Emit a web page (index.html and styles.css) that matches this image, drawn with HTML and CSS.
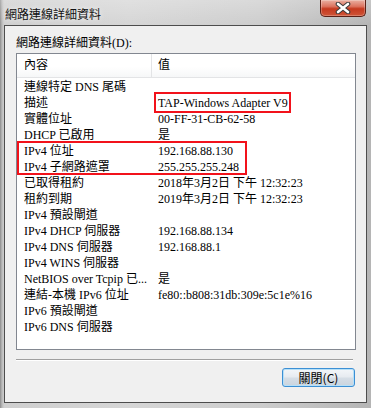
FILE: index.html
```html
<!DOCTYPE html>
<html lang="zh-Hant">
<head>
<meta charset="UTF-8" />
<meta name="viewport" content="width=device-width, initial-scale=1.0" />
<title>網路連線詳細資料</title>
<link rel="stylesheet" href="styles.css">
</head>
<body>
<div class="window">
  <div class="titlebar">
    <span class="title">網路連線詳細資料</span>
    <div class="close-btn">
      <svg width="18" height="12" viewBox="0 0 18 12">
        <path d="M4 2 L14 10 M14 2 L4 10" stroke="#3a3a3a" stroke-width="4.6" stroke-linecap="round"/>
        <path d="M4 2 L14 10 M14 2 L4 10" stroke="#ffffff" stroke-width="2.6" stroke-linecap="round"/>
      </svg>
    </div>
  </div>

  <div class="client">
    <div class="label">網路連線詳細資料(D):</div>

    <div class="listbox">
      <div class="list-head">
        <div class="col">內容</div>
        <div class="col">值</div>
      </div>
      <div class="list-body">
        <div class="row"><span>連線特定 DNS 尾碼</span><span></span></div>
        <div class="row"><span>描述</span><span>TAP-Windows Adapter V9</span></div>
        <div class="row"><span>實體位址</span><span>00-FF-31-CB-62-58</span></div>
        <div class="row"><span>DHCP 已啟用</span><span>是</span></div>
        <div class="row"><span>IPv4 位址</span><span>192.168.88.130</span></div>
        <div class="row"><span>IPv4 子網路遮罩</span><span>255.255.255.248</span></div>
        <div class="row"><span>已取得租約</span><span>2018年3月2日 下午 12:32:23</span></div>
        <div class="row"><span>租約到期</span><span>2019年3月2日 下午 12:32:23</span></div>
        <div class="row"><span>IPv4 預設閘道</span><span></span></div>
        <div class="row"><span>IPv4 DHCP 伺服器</span><span>192.168.88.134</span></div>
        <div class="row"><span>IPv4 DNS 伺服器</span><span>192.168.88.1</span></div>
        <div class="row"><span>IPv4 WINS 伺服器</span><span></span></div>
        <div class="row"><span>NetBIOS over Tcpip 已...</span><span>是</span></div>
        <div class="row"><span>連結-本機 IPv6 位址</span><span>fe80::b808:31db:309e:5c1e%16</span></div>
        <div class="row"><span>IPv6 預設閘道</span><span></span></div>
        <div class="row"><span>IPv6 DNS 伺服器</span><span></span></div>
      </div>
      <div class="mark mark-desc"></div>
      <div class="mark mark-ip"></div>
    </div>

    <div class="sep"></div>

    <div class="actions">
      <button class="btn">關閉(C)</button>
    </div>
  </div>
</div>
</body>
</html>
```

FILE: styles.css
```css
body {
  margin: 0;
  width: 371px;
  height: 408px;
  overflow: hidden;
  font-family: "Liberation Serif", "Noto Sans CJK TC", serif;
  font-size: 12px;
  color: #000;
  background: linear-gradient(to right, #8c8c8c 0, #b9b9b9 2px, #cfcfcf 4px, #d6d6d6 35%, #cdcdcd 70%, #b5b5b5 100%);
}

.window {
  display: flex;
  flex-direction: column;
  height: 408px;
}

.titlebar {
  height: 25px;
  display: flex;
  justify-content: space-between;
  align-items: flex-start;
  background: linear-gradient(to bottom, rgba(255,255,255,0.25), rgba(255,255,255,0));
}

.title {
  padding: 6px 0 0 5px;
  line-height: 16px;
  font-family: "Noto Sans CJK TC", sans-serif;
  color: #111;
  text-shadow: 0 0 5px rgba(255,255,255,0.9);
}

.close-btn {
  width: 46px;
  height: 17px;
  margin-right: 5px;
  box-sizing: border-box;
  border: 1px solid #5b2016;
  border-top: none;
  border-radius: 0 0 5px 5px;
  background: linear-gradient(to bottom, #eab0a2 0, #dc7460 40%, #c5391f 55%, #cf5538 100%);
  box-shadow: inset 0 0 0 1px rgba(255,255,255,0.25);
  display: flex;
  align-items: center;
  justify-content: center;
}

.client {
  margin: 0 4px 5px 4px;
  height: 378px;
  box-sizing: border-box;
  border: 1px solid #4d4d4d;
  background: #f0f0f0;
  padding: 9px 0 0 11px;
}

.label {
  height: 16px;
  line-height: 16px;
}

.listbox {
  position: relative;
  margin-top: 2px;
  width: 340px;
  height: 297px;
  box-sizing: border-box;
  border: 1px solid #828790;
  background: #fff;
}

.list-head {
  display: grid;
  grid-template-columns: 135px 1fr;
  height: 24px;
  box-sizing: border-box;
  border-bottom: 1px solid #e3e4e6;
  background: linear-gradient(to bottom, #fff 0, #fff 55%, #f6f7f8 100%);
}

.list-head .col {
  line-height: 23px;
  padding-left: 7px;
}

.list-head .col:first-child {
  border-right: 1px solid #e3e4e6;
}

.list-head .col:last-child {
  padding-left: 6px;
}

.list-body {
  padding-top: 1px;
}

.row {
  display: grid;
  grid-template-columns: 135px 1fr;
  height: 16px;
  line-height: 16px;
  white-space: nowrap;
}

.row span {
  overflow: hidden;
  padding-left: 7px;
}

.row span:last-child {
  padding-left: 6px;
}

.mark {
  position: absolute;
  box-sizing: border-box;
  border: 2px solid #f2121b;
}

.mark-desc {
  left: 137px;
  top: 38px;
  width: 137px;
  height: 21px;
}

.mark-ip {
  left: 0;
  top: 87px;
  width: 230px;
  height: 34px;
}

.sep {
  margin-top: 9px;
  width: 337px;
  border-top: 1px solid #a0a0a0;
  border-bottom: 1px solid #fff;
}

.actions {
  margin-top: 7px;
  width: 339px;
  display: flex;
  justify-content: flex-end;
}

.btn {
  width: 73px;
  height: 19px;
  padding: 0;
  box-sizing: border-box;
  border: 1px solid #3c8fd4;
  border-radius: 3px;
  background: linear-gradient(to bottom, #f3f6f9 0, #e6ebf0 48%, #d6dee6 52%, #cad4de 100%);
  box-shadow: inset 0 0 0 1px #b6e0f8;
  font-family: "Noto Sans CJK TC", sans-serif;
  font-size: 12px;
  line-height: 15px;
  color: #000;
}
```
